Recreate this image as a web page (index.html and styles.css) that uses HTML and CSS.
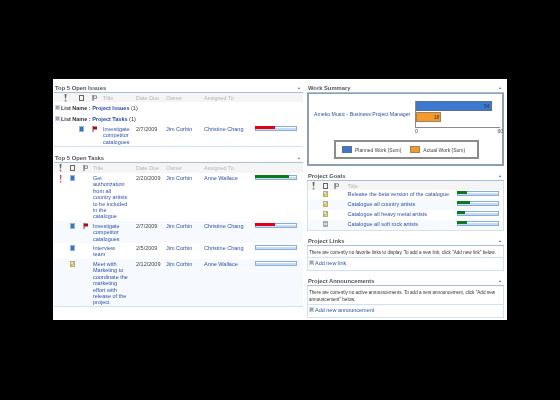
FILE: index.html
```html
<!DOCTYPE html>
<html lang="en">
<head>
    <meta charset="UTF-8">
    <title>Project Dashboard</title>
    <link rel="stylesheet" href="styles.css">
</head>
<body>
<svg class="defs" width="0" height="0">
    <symbol id="task" viewBox="0 0 5 6"><rect width="5" height="6" fill="#9db4cc"/><rect x="1" y="1" width="3" height="4" fill="#2f76c8"/></symbol>
    <symbol id="goal" viewBox="0 0 5 6"><rect width="5" height="6" fill="#b5ad8a"/><path d="M1 5 L4 2 V5Z" fill="#f2dc28"/><path d="M1 1h2v2H1z" fill="#e8e4c8"/></symbol>
    <symbol id="done" viewBox="0 0 5 6"><rect width="5" height="6" fill="#a4aca6"/><rect x="1" y="2" width="3" height="2" fill="#d5dcd6"/></symbol>
    <symbol id="flag" viewBox="0 0 5 6"><path d="M1 0V6" stroke="#555" fill="none"/><path d="M1 0.5h4v3H1z" fill="#c00018"/></symbol>
    <symbol id="urgent" viewBox="0 0 3 8"><path d="M1 0h1.4L2 5H1.4z" fill="#e8242c"/><rect x="1.2" y="6" width="1" height="1.6" fill="#e8242c"/></symbol>
    <symbol id="h-pri" viewBox="0 0 3 8"><path d="M0.6 0h2L2 4.6H1z" fill="#666"/><rect x="0.8" y="5.6" width="1.5" height="2" fill="#888"/></symbol>
    <symbol id="h-doc" viewBox="0 0 5 6"><rect x="0.5" y="0.5" width="4" height="5" fill="none" stroke="#666"/></symbol>
    <symbol id="h-flag" viewBox="0 0 5 6"><path d="M1 0V6" stroke="#555" fill="none"/><path d="M1.5 0.8h3v2.6h-3z" fill="none" stroke="#777" stroke-width="0.8"/></symbol>
</svg>

<div class="panel">
    <div class="col col-left">
        <section class="part part-issues">
            <h3 class="part-title">Top 5 Open Issues <span class="arrow"></span></h3>
            <table class="list">
                <colgroup><col class="c-a"><col class="c-b"><col class="c-c"><col class="c-title"><col class="c-date"><col class="c-owner"><col class="c-assign"><col class="c-bar"></colgroup>
                <thead>
                <tr><th class="ico"><svg class="i-pri"><use href="#h-pri"/></svg></th><th class="ico"><svg class="i"><use href="#h-doc"/></svg></th><th class="ico"><svg class="i"><use href="#h-flag"/></svg></th><th>Title</th><th>Date Due</th><th>Owner</th><th>Assigned To</th><th></th></tr>
                </thead>
                <tbody>
                <tr class="group"><td colspan="8"><span class="plus"></span>List Name : <a>Project Issues</a> <span class="count">(1)</span></td></tr>
                <tr class="group"><td colspan="8"><span class="plus"></span>List Name : <a>Project Tasks</a> <span class="count">(1)</span></td></tr>
                <tr class="last">
                    <td></td><td class="ico"><svg class="i"><use href="#task"/></svg></td><td class="ico"><svg class="i"><use href="#flag"/></svg></td>
                    <td><a>Investigate competitor catalogues</a></td><td>2/7/2009</td><td><a>Jim Corbin</a></td><td><a>Christine Chang</a></td>
                    <td><div class="bar"><div class="fill red" style="width: 50%"></div></div></td>
                </tr>
                </tbody>
            </table>
        </section>

        <section class="part part-tasks">
            <h3 class="part-title">Top 5 Open Tasks <span class="arrow"></span></h3>
            <table class="list list-tasks">
                <colgroup><col class="c-a"><col class="c-b"><col class="c-c"><col class="c-title"><col class="c-date"><col class="c-owner"><col class="c-assign"><col class="c-bar"></colgroup>
                <thead>
                <tr><th class="ico"><svg class="i-pri"><use href="#h-pri"/></svg></th><th class="ico"><svg class="i"><use href="#h-doc"/></svg></th><th class="ico"><svg class="i"><use href="#h-flag"/></svg></th><th>Title</th><th>Date Due</th><th>Owner</th><th>Assigned To</th><th></th></tr>
                </thead>
                <tbody>
                <tr>
                    <td class="ico"><svg class="i-pri"><use href="#urgent"/></svg></td><td class="ico"><svg class="i"><use href="#task"/></svg></td><td></td>
                    <td class="task-name"><a>Get authorization from all country artists to be included in the catalogue</a></td><td>2/20/2009</td><td><a>Jim Corbin</a></td><td><a>Anne Wallace</a></td>
                    <td><div class="bar"><div class="fill green" style="width: 86%"></div></div></td>
                </tr>
                <tr class="alt">
                    <td></td><td class="ico"><svg class="i"><use href="#task"/></svg></td><td class="ico"><svg class="i"><use href="#flag"/></svg></td>
                    <td class="task-name"><a>Investigate competitor catalogues</a></td><td>2/7/2009</td><td><a>Jim Corbin</a></td><td><a>Christine Chang</a></td>
                    <td><div class="bar"><div class="fill red" style="width: 50%"></div></div></td>
                </tr>
                <tr>
                    <td></td><td class="ico"><svg class="i"><use href="#task"/></svg></td><td></td>
                    <td class="task-name"><a>Interview team</a></td><td>2/5/2009</td><td><a>Jim Corbin</a></td><td><a>Christine Chang</a></td>
                    <td><div class="bar"></div></td>
                </tr>
                <tr class="alt last">
                    <td></td><td class="ico"><svg class="i"><use href="#goal"/></svg></td><td></td>
                    <td class="task-name"><a>Meet with Marketing to coordinate the marketing effort with release of the project</a></td><td>2/12/2009</td><td><a>Jim Corbin</a></td><td><a>Anne Wallace</a></td>
                    <td><div class="bar"></div></td>
                </tr>
                </tbody>
            </table>
        </section>
    </div>

    <div class="col col-right">
        <section class="part">
            <h3 class="part-title">Work Summary <span class="arrow"></span></h3>
            <div class="chart-box">
                <div class="chart">
                    <div class="chart-label"><a>Ameko Music - Business Project Manager</a></div>
                    <div class="plot">
                        <div class="plot-bars">
                            <div class="hbar planned" style="width: 90%">54</div>
                            <div class="hbar actual" style="width: 30%">18</div>
                        </div>
                        <div class="ticks"><span>0</span><span>60</span></div>
                    </div>
                </div>
                <div class="legend">
                    <span class="swatch planned"></span><span>Planned Work (Sum)</span>
                    <span class="swatch actual"></span><span>Actual Work (Sum)</span>
                </div>
            </div>
        </section>

        <section class="part part-goals">
            <h3 class="part-title">Project Goals <span class="arrow"></span></h3>
            <table class="goals">
                <colgroup><col class="g-a"><col class="g-b"><col class="g-c"><col class="g-title"><col class="g-bar"></colgroup>
                <thead>
                <tr><th class="ico"><svg class="i-pri"><use href="#h-pri"/></svg></th><th class="ico"><svg class="i"><use href="#h-doc"/></svg></th><th class="ico"><svg class="i"><use href="#h-flag"/></svg></th><th colspan="2" class="goal-head">Title</th></tr>
                </thead>
                <tbody>
                <tr><td></td><td class="ico"><svg class="i"><use href="#goal"/></svg></td><td></td><td class="goal-name"><a>Release the beta version of the catalogue</a></td><td><div class="bar"><div class="fill green" style="width: 25%"></div></div></td></tr>
                <tr class="alt"><td></td><td class="ico"><svg class="i"><use href="#goal"/></svg></td><td></td><td class="goal-name"><a>Catalogue all country artists</a></td><td><div class="bar"><div class="fill green" style="width: 33%"></div></div></td></tr>
                <tr><td></td><td class="ico"><svg class="i"><use href="#goal"/></svg></td><td></td><td class="goal-name"><a>Catalogue all heavy metal artists</a></td><td><div class="bar"><div class="fill green" style="width: 21%"></div></div></td></tr>
                <tr class="alt"><td></td><td class="ico"><svg class="i"><use href="#done"/></svg></td><td></td><td class="goal-name"><a>Catalogue all soft rock artists</a></td><td><div class="bar"><div class="fill green" style="width: 26%"></div></div></td></tr>
                </tbody>
            </table>
        </section>

        <section class="part part-links">
            <h3 class="part-title">Project Links <span class="arrow"></span></h3>
            <div class="notice">
                <p class="notice-text">There are currently no favorite links to display. To add a new link, click "Add new link" below.</p>
                <p class="notice-add"><span class="plus"></span><a>Add new link</a></p>
            </div>
        </section>

        <section class="part part-news">
            <h3 class="part-title">Project Announcements <span class="arrow"></span></h3>
            <div class="notice">
                <p class="notice-text">There are currently no active announcements. To add a new announcement, click "Add new announcement" below.</p>
                <p class="notice-add"><span class="plus"></span><a>Add new announcement</a></p>
            </div>
        </section>
    </div>
</div>
</body>
</html>
```

FILE: styles.css
```css
html, body {
    margin: 0;
    height: 100%;
}

body {
    background-color: #000;
    font-family: "Liberation Sans", sans-serif;
    font-size: 5.5px;
    color: #444;
}

.defs {
    position: absolute;
}

.panel {
    box-sizing: border-box;
    width: 454px;
    height: 241px;
    margin: 79px 0 0 53px;
    padding: 5px 3px 0 1px;
    background-color: #fff;
    display: flex;
    gap: 4px;
    filter: blur(0.3px);
}

.col-left {
    width: 249px;
}

.col-right {
    width: 197px;
}

.part-title {
    margin: 0;
    height: 8px;
    line-height: 8px;
    padding-left: 1px;
    font-size: 5.8px;
    font-weight: bold;
    color: #555;
    border-bottom: 1px solid #a9bfdc;
    display: flex;
    justify-content: space-between;
    align-items: center;
}

.arrow {
    width: 0;
    height: 0;
    margin-right: 3px;
    border-left: 1px solid transparent;
    border-right: 1px solid transparent;
    border-bottom: 2px solid #666;
}

a {
    color: #2f52a8;
}

table {
    width: 100%;
    border-collapse: collapse;
    table-layout: fixed;
}

th {
    height: 9px;
    padding: 0 1px;
    background-color: #f5f5f5;
    color: #b5b5b5;
    font-weight: normal;
    text-align: left;
}

td {
    padding: 2px 1px 1px;
    vertical-align: top;
    line-height: 6.4px;
}

.ico {
    text-align: center;
}

.i {
    display: block;
    width: 5px;
    height: 6px;
    margin: 0 auto;
}

.i-pri {
    display: block;
    width: 3px;
    height: 8px;
    margin: 0 auto;
}

.alt td {
    background-color: #f6f9fd;
}

.last td {
    border-bottom: 1px solid #d3e2f3;
}

/* left lists */
.c-a { width: 22px; }
.c-b { width: 11px; }
.c-c { width: 15px; }
.c-title { width: 33px; }
.c-date { width: 30px; }
.c-owner { width: 38px; }
.c-assign { width: 51px; }

.list-tasks .c-a { width: 12px; }
.list-tasks .c-b { width: 12px; }
.list-tasks .c-c { width: 14px; }
.list-tasks .c-title { width: 43px; }

.list-tasks th {
    height: 10px;
}

.list-tasks .last td {
    padding-bottom: 0;
}

.task-name {
    padding-right: 7px;
}

.part-issues {
    height: 70px;
}

.group td {
    font-weight: bold;
    color: #333;
    height: 9px;
    padding: 2px 1px 0;
    vertical-align: middle;
}

.group a {
    color: #2548a8;
}

.count {
    font-weight: normal;
}

.plus {
    display: inline-block;
    width: 3px;
    height: 3px;
    margin-right: 1px;
    background-color: #9aa7b8;
    border: 0.5px solid #ccd3dc;
}

.bar {
    box-sizing: border-box;
    width: 42px;
    height: 5px;
    border: 1px solid #86aede;
    background: linear-gradient(#fff 50%, #c8daee 50%);
}

.fill {
    height: 3px;
    margin: -1px 0 0 -1px;
}

.red {
    background-color: #e00018;
}

.green {
    background-color: #0a7a1c;
}

/* chart */
.chart-box {
    box-sizing: border-box;
    height: 73px;
    border: 2px solid #8d9db3;
    border-top-width: 1px;
    padding: 7px 0 0;
}

.chart {
    display: flex;
    align-items: flex-start;
}

.chart-label {
    width: 106px;
    padding: 10px 0 0 5px;
    box-sizing: border-box;
    white-space: nowrap;
    font-size: 5.2px;
}

.plot {
    width: 85px;
}

.plot-bars {
    height: 26px;
    border-left: 1px solid #8a8a8a;
    border-bottom: 1px solid #8a8a8a;
    display: flex;
    flex-direction: column;
    gap: 1px;
}

.hbar {
    box-sizing: border-box;
    height: 10px;
    line-height: 8px;
    text-align: right;
    padding-right: 1px;
    color: #333;
    font-size: 5px;
}

.planned {
    background-color: #3d78cf;
    border: 1px solid #5d6f8c;
}

.actual {
    background-color: #f7982c;
    border: 1px solid #9a8560;
}

.ticks {
    display: flex;
    justify-content: space-between;
    margin-right: -3px;
    line-height: 7px;
    font-size: 5px;
}

.legend {
    box-sizing: border-box;
    width: 145px;
    height: 19px;
    margin: 5px 0 0 25px;
    border: 2px solid #8c8c8c;
    display: flex;
    align-items: center;
    gap: 3px;
    padding-left: 6px;
    font-size: 5px;
}

.swatch {
    box-sizing: border-box;
    width: 10px;
    height: 7px;
}

.swatch.actual {
    margin-left: 6px;
}

/* goals */
.part-goals {
    margin-top: 6px;
}

.goals {
    border-left: 1px solid #d3e2f3;
    border-right: 1px solid #d3e2f3;
    border-bottom: 1px solid #d3e2f3;
}

.g-a { width: 12px; }
.g-b { width: 12px; }
.g-c { width: 10px; }
.g-title { width: 114px; }

.goal-head,
.goal-name {
    padding-left: 6px;
}

.goals td {
    height: 8px;
    padding-top: 1px;
    padding-bottom: 1px;
}

/* links and announcements */
.part-links {
    margin-top: 6px;
}

.part-news {
    margin-top: 6px;
}

.notice {
    border-left: 1px solid #d3e2f3;
    border-right: 1px solid #d3e2f3;
    border-bottom: 1px solid #d3e2f3;
}

.notice p {
    margin: 0;
}

.notice-text {
    padding: 3px 1px 1px;
    line-height: 7px;
    font-size: 4.6px;
    color: #333;
    border-bottom: 1px solid #d3e2f3;
}

.notice-add {
    height: 12px;
    line-height: 11px;
    padding-left: 1px;
}
```
